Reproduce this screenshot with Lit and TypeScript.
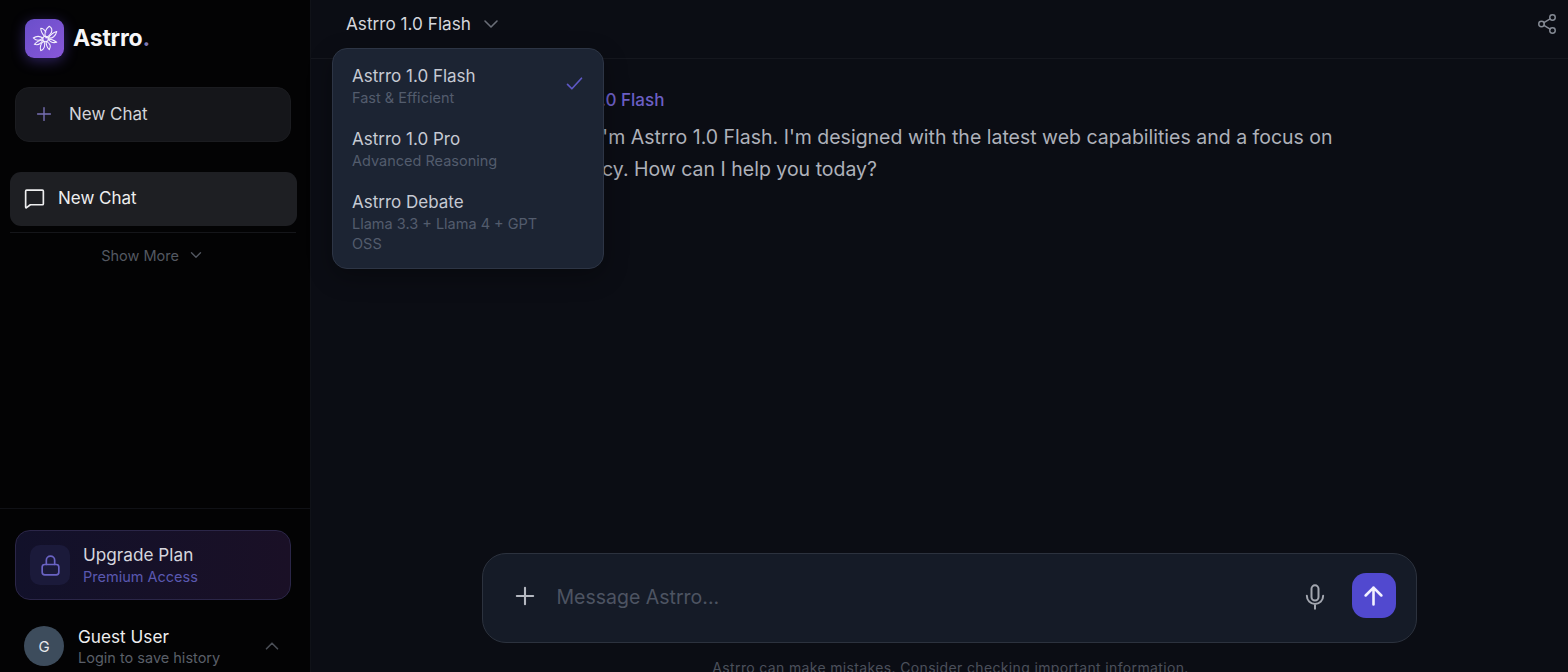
import { LitElement, html, css, svg } from "lit";
import { customElement } from "lit/decorators.js";

const stroke = (inner: unknown, size = 20, width = 2) => html`<svg width=${size} height=${size} viewBox="0 0 24 24" fill="none" stroke="currentColor" stroke-width=${width} stroke-linecap="round" stroke-linejoin="round">${inner}</svg>`;

const plus = svg`<path d="M5 12h14M12 5v14"/>`;
const chevDown = svg`<path d="M6 9l6 6 6-6"/>`;
const chevUp = svg`<path d="M6 15l6-6 6 6"/>`;
const check = svg`<path d="M4 13l5 5L20 6"/>`;
const bubble = svg`<path d="M4.5 4h15a1 1 0 0 1 1 1v12a1 1 0 0 1-1 1H8l-4 3a.8.8 0 0 1-.5-.8V5a1 1 0 0 1 1-1z"/>`;
const lock = svg`<rect x="4" y="11" width="16" height="10" rx="2.5"/><path d="M8 11V7a4 4 0 0 1 8 0v4"/>`;
const mic = svg`<rect x="9" y="2" width="6" height="13" rx="3"/><path d="M5 11a7 7 0 0 0 14 0M12 18v4"/>`;
const arrow = svg`<path d="M12 20V5M5 12l7-7 7 7"/>`;
const share = svg`<circle cx="18" cy="5" r="3"/><circle cx="6" cy="12" r="3"/><circle cx="18" cy="19" r="3"/><path d="M8.6 13.5l6.8 4M15.4 6.5l-6.8 4"/>`;

const models = [
  { name: "Astrro 1.0 Flash", sub: "Fast & Efficient", on: true },
  { name: "Astrro 1.0 Pro", sub: "Advanced Reasoning", on: false },
  { name: "Astrro Debate", sub: "Llama 3.3 + Llama 4 + GPT OSS", on: false },
];

@customElement("app-root")
export class AppRoot extends LitElement {
  static styles = css`
    :host { display: block; height: 672px; overflow: hidden; font-family: Inter, "Noto Sans", sans-serif; background: #0b0d14; }
    * { box-sizing: border-box; }
    .shell { display: flex; height: 677px; }
    .side { width: 311px; flex: none; display: flex; flex-direction: column; background: #030304; border-right: 1px solid #101218; }
    .brand { display: flex; gap: 9px; padding: 19px 25px 0; height: 87px; align-items: flex-start; }
    .logo { width: 39px; height: 39px; border-radius: 9px; background: linear-gradient(135deg, #6a4fca, #8857d9); box-shadow: 0 3px 14px rgba(110,80,230,.4); display: flex; align-items: center; justify-content: center; }
    .word { font-size: 23px; font-weight: 700; color: #f6f6f8; line-height: 39px; letter-spacing: -.2px; }
    .word i { font-style: normal; color: #7d78b4; }
    .new { margin: 0 19px 0 15px; height: 55px; border-radius: 14px; background: #15161a; border: 1px solid #1b1c20; display: flex; align-items: center; gap: 14px; padding: 0 0 1px 17px; color: #d2d3d8; font-size: 17px; }
    .new svg { color: #7770b4; }
    .item { margin: 30px 13px 0 10px; height: 54px; border-radius: 11px; background: #1e1f23; display: flex; align-items: center; gap: 11px; padding: 0 0 2px 12px; color: #eeeeef; font-size: 17px; }
    .rule { height: 1px; background: #15161a; margin: 6px 14px 0 10px; }
    .more { display: flex; justify-content: center; align-items: center; gap: 8px; margin: 13px 0 0; color: #535861; font-size: 14.5px; height: 18px; padding-right: 4px; }
    .grow { flex: 1; }
    .foot { border-top: 1px solid #101116; padding: 21px 19px 0 15px; height: 169px; }
    .upgrade { height: 70px; border-radius: 15px; border: 1px solid #2b2648; background: linear-gradient(90deg, #12112a, #1a1026); display: flex; align-items: center; gap: 13px; padding-left: 14px; }
    .lockbox { width: 40px; height: 40px; border-radius: 10px; background: #1b1a3a; color: #6a63c4; display: flex; align-items: center; justify-content: center; }
    .t1 { color: #d6d6de; font-size: 17.2px; line-height: 22px; }
    .t2 { color: #5a58b0; font-size: 14.5px; line-height: 21px; }
    .user { display: flex; align-items: center; gap: 14px; margin: 24px 0 0 9px; height: 44px; }
    .avatar { width: 40px; height: 40px; border-radius: 50%; background: #3d4c5c; color: #e6e8ec; display: flex; align-items: center; justify-content: center; font-size: 15px; flex: none; }
    .uname { color: #eeeeef; font-size: 17.2px; line-height: 22px; margin-top: 2px; }
    .usub { color: #5a5f68; font-size: 14.5px; line-height: 20px; }
    .user .chev { margin-left: auto; margin-right: 8px; color: #4a4e56; display: flex; }

    .main { flex: 1; min-width: 0; display: flex; flex-direction: column; position: relative; background: #0b0d14; }
    .top { height: 59px; flex: none; border-bottom: 1px solid #15171e; display: flex; align-items: flex-start; padding: 13px 10px 0 35px; color: #d5d6dc; font-size: 17.2px; }
    .top .label { line-height: 22px; }
    .top .chev { color: #6a6e78; margin: -1px 0 0 8px; display: flex; }
    .top .share { margin-left: auto; color: #858a94; display: flex; }
    .chat { flex: 1; min-height: 0; padding: 30px 0 0 228px; }
    .who { color: #6c5fc4; font-size: 17px; font-weight: 500; line-height: 22px; }
    .msg { color: #aeb1ba; font-size: 19.5px; line-height: 31.5px; margin: 11px 0 0; width: 810px; }
    .dock { flex: none; display: flex; flex-direction: column; align-items: center; padding-left: 19px; }
    .box { width: 935px; height: 90px; border-radius: 24px; border: 1px solid #2c323e; background: #151b27; display: flex; align-items: center; padding: 0 20px 0 28px; }
    .box .add { color: #b4b8c0; display: flex; margin-top: -5px; }
    .box .ph { color: #4d5462; font-size: 19.5px; margin: -2px 0 0 18px; flex: 1; }
    .box .mic { color: #a3a7b0; display: flex; margin: -3px 23px 0 0; }
    .send { width: 44px; height: 45px; border-radius: 14px; background: #5149cf; color: #f2f1ff; display: flex; align-items: center; justify-content: center; margin-top: -5px; }
    .note { color: #4b505b; font-size: 14px; line-height: 18px; margin: 16px 0 0 3px; letter-spacing: .35px; }

    .menu { position: absolute; left: 21px; top: 48px; width: 272px; height: 221px; border-radius: 15px; background: #1c2433; border: 1px solid #2d3545; padding: 16px 20px 0 19px; box-shadow: 0 8px 24px rgba(0,0,0,.3); }
    .opt { position: relative; margin-bottom: 20px; }
    .opt .n { color: #c6cad3; font-size: 17px; line-height: 22px; }
    .opt .s { color: #535c6d; font-size: 14.5px; line-height: 20px; width: 200px; margin-top: 1px; }
    .opt .c { position: absolute; right: -2px; top: 8px; color: #5e58c6; display: flex; }
  `;

  render() {
    return html`<div class="shell">
      <aside class="side">
        <div class="brand">
          <div class="logo">
            <svg width="32" height="32" viewBox="0 0 30 30" fill="none" stroke="#f3effc" stroke-width="1" stroke-linejoin="round">
              <path d="M16 14c-2-4-1-8 3-11 2 1 3 3 2 6-1 2-3 4-5 5z"/>
              <path d="M15 13c-2-2-4-5-4-8 2 0 4 2 5 4"/>
              <path d="M18 14c2-3 5-5 8-6-1 4-4 7-8 6z"/>
              <path d="M13 14c-3-2-6-2-9 0 3 3 6 3 9 0z"/>
              <path d="M13 16c-3 0-6 2-8 4 3 1 6 0 8-4z"/>
              <path d="M14 17c-3 2-4 5-3 9 3-1 5-5 3-9z"/>
              <path d="M16 17c0 3 1 6 3 8 2-3 1-6-3-8z"/>
              <path d="M18 15c3 0 5 1 8 3-3 1-6 0-8-3z"/>
              <circle cx="15.5" cy="15" r="2.6"/>
            </svg>
          </div>
          <div class="word">Astrro<i>.</i></div>
        </div>
        <div class="new">${stroke(plus, 22, 1.5)}<span>New Chat</span></div>
        <div class="item">${stroke(bubble, 25, 1.6)}<span>New Chat</span></div>
        <div class="rule"></div>
        <div class="more"><span>Show More</span>${stroke(chevDown, 18, 1.8)}</div>
        <div class="grow"></div>
        <div class="foot">
          <div class="upgrade">
            <div class="lockbox">${stroke(lock, 25, 1.6)}</div>
            <div><div class="t1">Upgrade Plan</div><div class="t2">Premium Access</div></div>
          </div>
          <div class="user">
            <div class="avatar">G</div>
            <div><div class="uname">Guest User</div><div class="usub">Login to save history</div></div>
            <div class="chev">${stroke(chevUp, 22, 1.8)}</div>
          </div>
        </div>
      </aside>
      <main class="main">
        <header class="top">
          <span class="label">Astrro 1.0 Flash</span>
          <span class="chev">${stroke(chevDown, 24, 1.6)}</span>
          <span class="share">${stroke(share, 22, 1.6)}</span>
        </header>
        <section class="chat">
          <div class="who">Astrro 1.0 Flash</div>
          <p class="msg">Hello! I'm Astrro 1.0 Flash. I'm designed with the latest web capabilities and a focus on accuracy. How can I help you today?</p>
        </section>
        <div class="dock">
          <div class="box">
            <span class="add">${stroke(plus, 28, 1.8)}</span>
            <span class="ph">Message Astrro...</span>
            <span class="mic">${stroke(mic, 28, 1.7)}</span>
            <div class="send">${stroke(arrow, 27, 2.3)}</div>
          </div>
          <div class="note">Astrro can make mistakes. Consider checking important information.</div>
        </div>
        <div class="menu">
          ${models.map(m => html`<div class="opt">
            <div class="n">${m.name}</div>
            <div class="s">${m.sub}</div>
            ${m.on ? html`<span class="c">${stroke(check, 21, 1.9)}</span>` : ""}
          </div>`)}
        </div>
      </main>
    </div>`;
  }
}
